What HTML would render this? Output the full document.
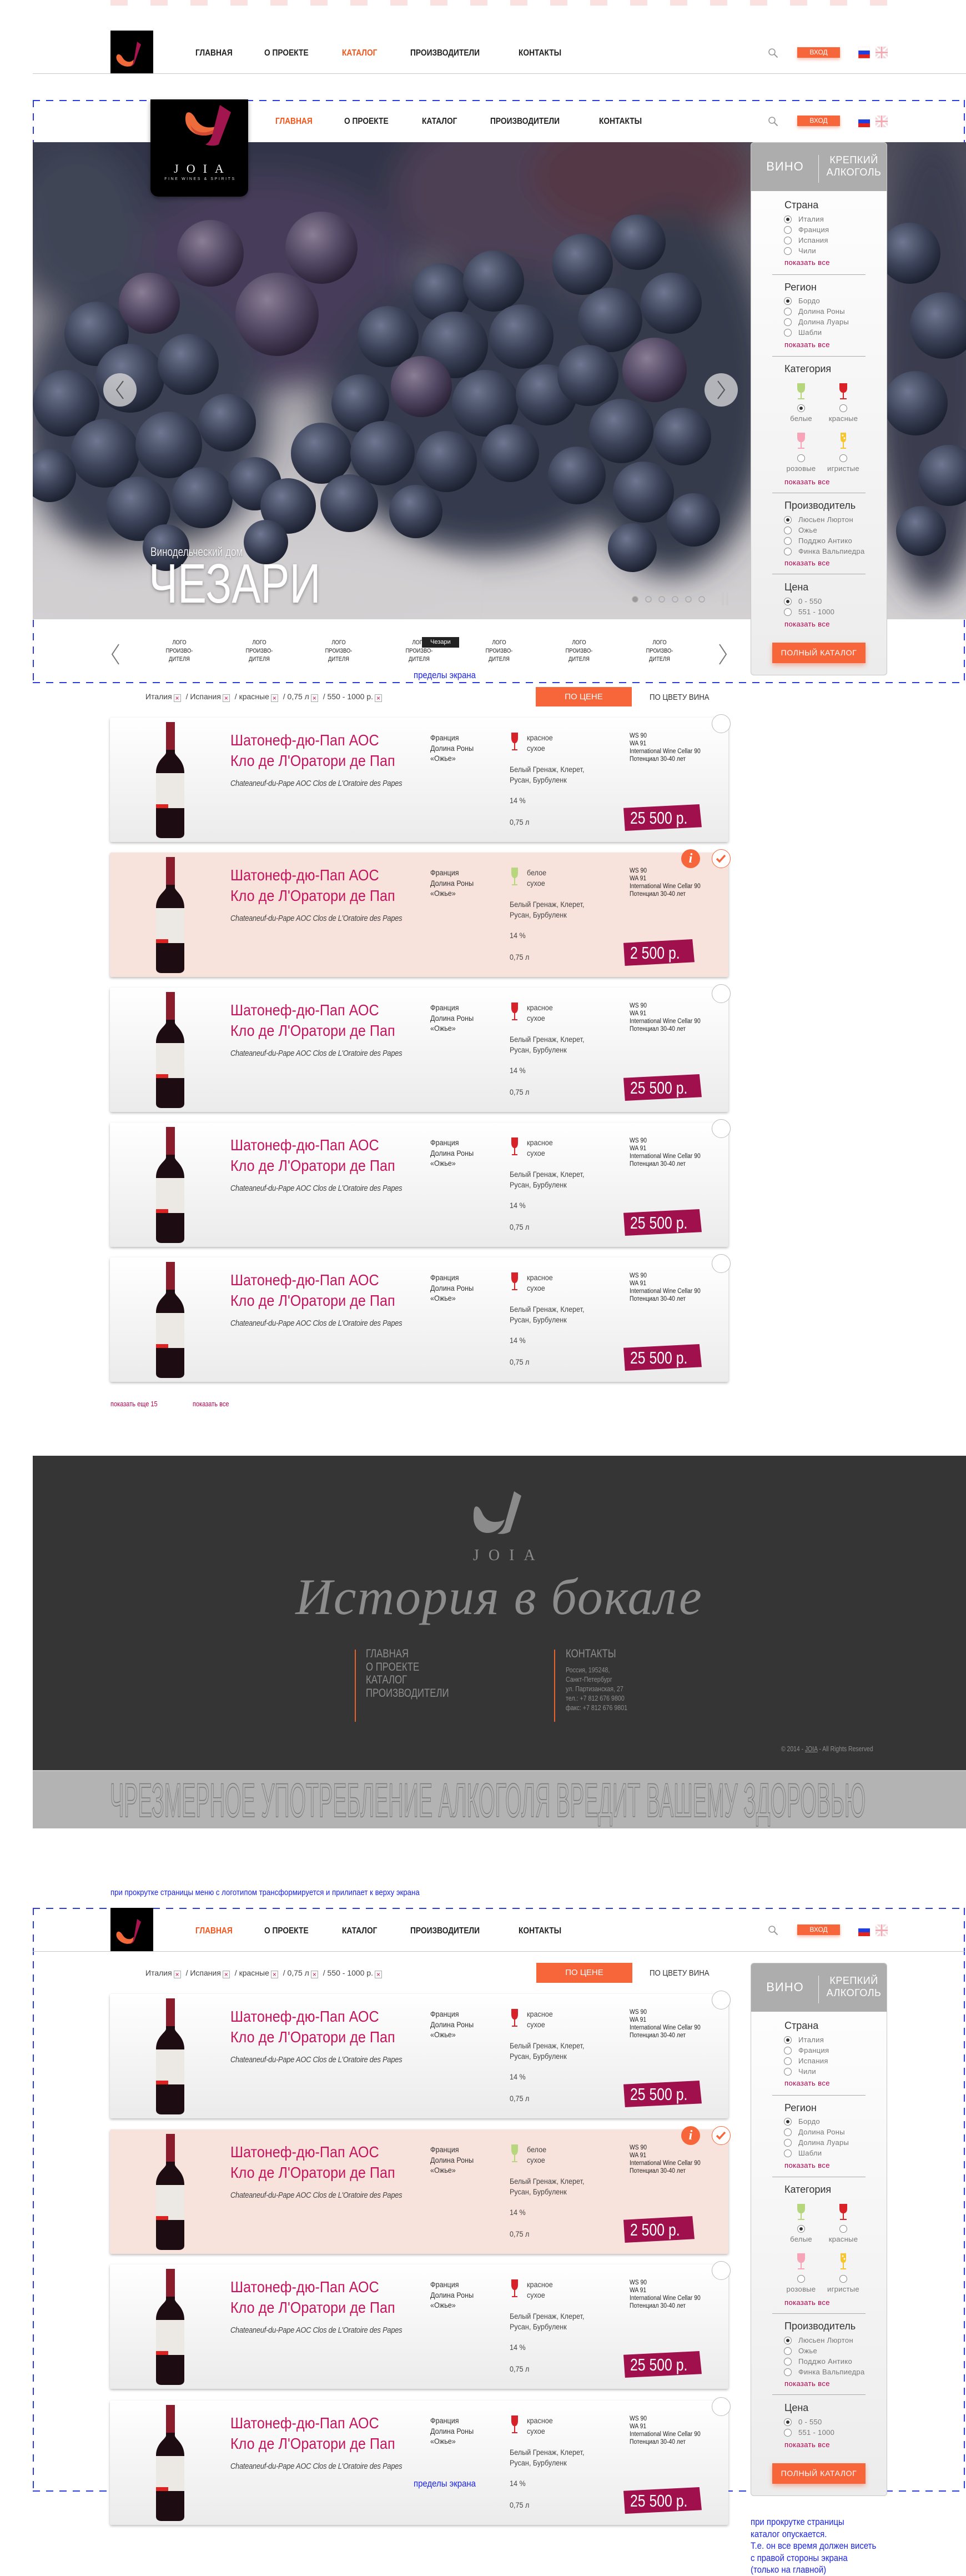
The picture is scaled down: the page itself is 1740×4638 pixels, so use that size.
<!DOCTYPE html>
<html><head><meta charset="utf-8">
<style>
*{margin:0;padding:0;box-sizing:border-box}
body{width:1740px;height:4637px;position:relative;background:#fff;font-family:"Liberation Sans","DejaVu Sans",sans-serif;overflow:hidden;color:#333}
.a{position:absolute}
.nav{position:absolute;font-size:16px;font-weight:bold;color:#222;transform:scaleX(.86);transform-origin:left center;white-space:nowrap;line-height:20px}
.nav.o{color:#f2561d}
.dh{position:absolute;height:2px;background:repeating-linear-gradient(90deg,#2a3be0 0 13px,transparent 13px 24px)}
.dv{position:absolute;width:2px;background:repeating-linear-gradient(180deg,#2a3be0 0 13px,transparent 13px 24px)}
.btn{position:absolute;background:#f7663b;color:#fff;font-size:12px;text-align:center;box-shadow:0 3px 6px rgba(247,102,59,.45)}
.card{position:absolute;left:198px;width:1114px;height:224px;background:linear-gradient(#fff,#ebebeb);box-shadow:0 2px 5px rgba(0,0,0,.28);border-radius:3px}
.card.p{background:#f8e3dc}
.card .t{position:absolute;left:217px;top:22px;font-size:28px;line-height:37px;color:#c4145e;white-space:nowrap;transform:scaleX(.9);transform-origin:left}
.card .s{position:absolute;left:217px;top:110px;font-size:15px;font-style:italic;color:#444;white-space:nowrap;transform:scaleX(.86);transform-origin:left;letter-spacing:-.3px}
.card .c2{position:absolute;left:577px;top:27px;font-size:14px;line-height:18.5px;color:#333;white-space:nowrap;transform:scaleX(.9);transform-origin:left}
.card .c3{position:absolute;left:751px;top:27px;font-size:14px;line-height:19px;color:#444;transform:scaleX(.9);transform-origin:left}
.card .c3b{position:absolute;left:720px;top:84px;font-size:14px;line-height:19px;color:#444;white-space:nowrap;transform:scaleX(.9);transform-origin:left}
.card .pc{position:absolute;left:720px;font-size:14px;color:#444;transform:scaleX(.9);transform-origin:left;line-height:18px}
.card .ws{position:absolute;left:936px;top:26px;font-size:11.5px;line-height:14px;color:#222;white-space:nowrap;transform:scaleX(.9);transform-origin:left}
.card .gl{position:absolute;left:722px;top:26px}
.card .bt{position:absolute;left:83px;top:8px}
.card .pr{position:absolute;left:925px;top:156px;height:48px;background:#a0104c;clip-path:polygon(0 14%,97% 0,100% 86%,2% 100%);color:#fff;font-size:31px;line-height:50px;padding-left:12px;white-space:nowrap;filter:drop-shadow(0 3px 2px rgba(0,0,0,.3))}
.card .pr span{display:inline-block;transform:scaleX(.8);transform-origin:left}
.card .ck{position:absolute;left:1084px;top:-6px;width:34px;height:34px;border-radius:50%;border:1.5px solid #bbb;background:#fff}
.card .ck.on{border-color:#f7663b}
.card .inf{position:absolute;left:1029px;top:-6px;width:34px;height:34px;border-radius:50%;background:#f7663b;color:#fff;font:italic bold 24px "Liberation Serif",serif;text-align:center;line-height:34px}
.flt{position:absolute;left:262px;font-size:14px;color:#444;white-space:nowrap;line-height:18px}
.x{display:inline-block;width:13px;height:14px;border:1px solid #aaa;color:#d0104c;font-size:12px;line-height:12px;text-align:center;vertical-align:-2px;margin:0 5px 0 3px;background:#fafafa}
.sb{position:absolute;left:1352px;width:246px;height:960px;border:1px solid #c8c8c8;border-radius:6px;background:linear-gradient(#fff,#ececec);overflow:hidden}
.sb .hd{position:absolute;left:0;top:0;width:246px;height:87px;background:#adadad}
.sb .h{position:absolute;left:60px;font-size:18px;color:#333;line-height:22px;white-space:nowrap}
.sb .i{position:absolute;left:85px;font-size:13px;color:#777;line-height:18px;white-space:nowrap;letter-spacing:.3px}
.sb .r{position:absolute;left:59px;width:14px;height:14px;border:1px solid #888;border-radius:50%;background:#fff}
.sb .r.on::after{content:"";position:absolute;left:3px;top:3px;width:6px;height:6px;border-radius:50%;background:#333}
.sb .m{position:absolute;left:60px;font-size:13px;color:#b5004d;line-height:18px;letter-spacing:.4px}
.sb .dl{position:absolute;left:38px;width:168px;height:1px;background:#aaa}
.sb .lb{position:absolute;font-size:13px;color:#777;width:80px;text-align:center;line-height:18px;letter-spacing:.3px}
.sb .b{position:absolute;left:38px;top:900px;width:168px;height:37px;background:#f7663b;color:#fff;font-size:14px;text-align:center;line-height:37px;letter-spacing:.6px;box-shadow:0 4px 8px rgba(247,102,59,.45)}
.blue{position:absolute;color:#1b25e6;font-size:15px;white-space:nowrap;transform:scaleX(.88);transform-origin:left}
.lg{position:absolute;width:80px;text-align:center;font-size:11px;line-height:15px;color:#222;transform:scaleX(.85)}
.ft{position:absolute;color:#8d8d8d;font-size:21px;line-height:23.5px;transform:scaleX(.8);transform-origin:left;white-space:nowrap}
</style></head><body>

<div class="a" style="left:199px;top:0;width:1400px;height:10px;background:repeating-linear-gradient(90deg,#fbe0e0 0 31px,transparent 31px 72px)"></div>

<div class="a" style="left:199px;top:55px;width:77px;height:78px;background:#000">
<svg width="77" height="78" viewBox="0 0 77 78"><path d="M12 44c3-3 7 0 10 5 5 8 14 10 20 3l-2 10c-8 6-22 2-28-8-2-4-2-8 0-10z" fill="#f26a3a"/><path d="M48 20l7 5-12 34c-3 6-9 6-9 6 5-2 7-6 8-10z" fill="#a6154f"/></svg></div>
<div class="nav" style="left:352px;top:86px">ГЛАВНАЯ</div>
<div class="nav" style="left:476px;top:86px">О ПРОЕКТЕ</div>
<div class="nav o" style="left:616px;top:86px">КАТАЛОГ</div>
<div class="nav" style="left:739px;top:86px">ПРОИЗВОДИТЕЛИ</div>
<div class="nav" style="left:934px;top:86px">КОНТАКТЫ</div>
<div class="a" style="left:59px;top:132px;width:1681px;height:1px;background:#c8c8c8"></div>

<svg class="a" style="left:1383px;top:86px" width="20" height="20" viewBox="0 0 20 20"><circle cx="7.5" cy="7.5" r="5.5" fill="none" stroke="#999" stroke-width="1.6"/><path d="M11.5 11.5l6 6" stroke="#999" stroke-width="2"/></svg>
<div class="btn" style="left:1436px;top:85px;width:77px;height:19px;line-height:19px">ВХОД</div>
<svg class="a" style="left:1546px;top:84px" width="21" height="21"><rect width="21" height="7" fill="#fff"/><rect y="7" width="21" height="7" fill="#1f3fe0"/><rect y="14" width="21" height="7" fill="#e2261f"/><rect width="21" height="21" fill="none" stroke="#ddd" stroke-width=".5"/></svg>
<svg class="a" style="left:1577px;top:84px" width="22" height="21"><rect width="22" height="21" fill="#f6d1d6"/><path d="M0 0L22 21M22 0L0 21" stroke="#fff" stroke-width="3"/><path d="M11 0v21M0 10.5h22" stroke="#fff" stroke-width="6"/><path d="M11 0v21M0 10.5h22" stroke="#f2a9b2" stroke-width="3"/></svg>

<div class="dh" style="left:59px;top:180px;width:1680px"></div>
<div class="dv" style="left:59px;top:180px;height:1050px"></div>
<div class="dv" style="left:1736px;top:180px;height:1050px"></div>
<div class="dh" style="left:59px;top:1228px;width:1680px"></div>

<div class="nav o" style="left:496px;top:209px">ГЛАВНАЯ</div>
<div class="nav" style="left:620px;top:209px">О ПРОЕКТЕ</div>
<div class="nav" style="left:760px;top:209px">КАТАЛОГ</div>
<div class="nav" style="left:883px;top:209px">ПРОИЗВОДИТЕЛИ</div>
<div class="nav" style="left:1079px;top:209px">КОНТАКТЫ</div>
<svg class="a" style="left:1383px;top:209px" width="20" height="20" viewBox="0 0 20 20"><circle cx="7.5" cy="7.5" r="5.5" fill="none" stroke="#999" stroke-width="1.6"/><path d="M11.5 11.5l6 6" stroke="#999" stroke-width="2"/></svg>
<div class="btn" style="left:1436px;top:208px;width:77px;height:19px;line-height:19px">ВХОД</div>
<svg class="a" style="left:1546px;top:208px" width="21" height="21"><rect width="21" height="7" fill="#fff"/><rect y="7" width="21" height="7" fill="#1f3fe0"/><rect y="14" width="21" height="7" fill="#e2261f"/></svg>
<svg class="a" style="left:1577px;top:208px" width="22" height="21"><rect width="22" height="21" fill="#f6d1d6"/><path d="M0 0L22 21M22 0L0 21" stroke="#fff" stroke-width="3"/><path d="M11 0v21M0 10.5h22" stroke="#fff" stroke-width="6"/><path d="M11 0v21M0 10.5h22" stroke="#f2a9b2" stroke-width="3"/></svg>

<svg class="a" style="left:59px;top:256px" width="1681" height="859" viewBox="0 0 1681 859">
<defs>
<filter id="bl" x="-30%" y="-30%" width="160%" height="160%"><feGaussianBlur stdDeviation="28"/></filter>
<radialGradient id="g" cx="38%" cy="32%" r="70%"><stop offset="0" stop-color="#6f7891"/><stop offset=".55" stop-color="#3d445a"/><stop offset="1" stop-color="#1c2130"/></radialGradient>
<radialGradient id="gp" cx="38%" cy="32%" r="70%"><stop offset="0" stop-color="#8a7d95"/><stop offset=".6" stop-color="#4e4460"/><stop offset="1" stop-color="#2a2236"/></radialGradient>
<linearGradient id="bg" x1="0" y1="0" x2="0" y2="1"><stop offset="0" stop-color="#4e4d5a"/><stop offset=".45" stop-color="#99969e"/><stop offset=".75" stop-color="#c9c6c9"/><stop offset="1" stop-color="#d4d1d3"/></linearGradient>
</defs>
<rect width="1681" height="859" fill="url(#bg)"/>
<g filter="url(#bl)">
<ellipse cx="600" cy="60" rx="700" ry="150" fill="#33364a"/>
<ellipse cx="420" cy="250" rx="260" ry="190" fill="#463d5a"/>
<ellipse cx="900" cy="90" rx="250" ry="160" fill="#4d3f54"/>
<ellipse cx="1100" cy="60" rx="200" ry="110" fill="#553845"/>
<ellipse cx="80" cy="150" rx="120" ry="150" fill="#3f4456"/>
<ellipse cx="1620" cy="400" rx="110" ry="420" fill="#3a3d50"/>
<ellipse cx="200" cy="500" rx="220" ry="260" fill="#3a3f52"/>
<ellipse cx="820" cy="480" rx="300" ry="260" fill="#353a4e"/>
<ellipse cx="1150" cy="450" rx="180" ry="330" fill="#343a4c"/>
<ellipse cx="350" cy="820" rx="400" ry="90" fill="#d2cfd1"/>
</g>
<g>
<circle cx="115" cy="345" r="58" fill="url(#g)"/><circle cx="210" cy="290" r="55" fill="url(#gp)"/>
<circle cx="60" cy="470" r="60" fill="url(#g)"/><circle cx="175" cy="425" r="62" fill="url(#g)"/>
<circle cx="280" cy="400" r="55" fill="url(#g)"/><circle cx="130" cy="560" r="62" fill="url(#g)"/>
<circle cx="245" cy="545" r="60" fill="url(#g)"/><circle cx="350" cy="505" r="52" fill="url(#g)"/>
<circle cx="190" cy="660" r="58" fill="url(#g)"/><circle cx="305" cy="640" r="55" fill="url(#g)"/>
<circle cx="400" cy="615" r="48" fill="url(#g)"/><circle cx="240" cy="730" r="42" fill="url(#g)"/>
<circle cx="30" cy="600" r="48" fill="url(#g)"/>
<circle cx="320" cy="200" r="60" fill="url(#gp)"/><circle cx="440" cy="310" r="75" fill="url(#gp)"/>
<circle cx="520" cy="190" r="65" fill="url(#gp)"/>
<circle cx="735" cy="270" r="52" fill="url(#g)"/><circle cx="830" cy="250" r="55" fill="url(#g)"/>
<circle cx="640" cy="350" r="55" fill="url(#g)"/><circle cx="760" cy="365" r="60" fill="url(#g)"/>
<circle cx="880" cy="350" r="58" fill="url(#g)"/><circle cx="700" cy="440" r="55" fill="url(#gp)"/>
<circle cx="815" cy="470" r="60" fill="url(#g)"/><circle cx="925" cy="455" r="55" fill="url(#g)"/>
<circle cx="590" cy="470" r="52" fill="url(#g)"/><circle cx="520" cy="560" r="55" fill="url(#g)"/>
<circle cx="630" cy="560" r="58" fill="url(#g)"/><circle cx="745" cy="575" r="55" fill="url(#g)"/>
<circle cx="860" cy="560" r="52" fill="url(#g)"/><circle cx="460" cy="655" r="50" fill="url(#g)"/>
<circle cx="570" cy="650" r="52" fill="url(#g)"/><circle cx="690" cy="665" r="48" fill="url(#g)"/>
<circle cx="420" cy="720" r="40" fill="url(#g)"/>
<circle cx="990" cy="220" r="55" fill="url(#g)"/><circle cx="1090" cy="180" r="50" fill="url(#g)"/>
<circle cx="1040" cy="320" r="58" fill="url(#g)"/><circle cx="1150" cy="290" r="55" fill="url(#g)"/>
<circle cx="1000" cy="420" r="55" fill="url(#g)"/><circle cx="1120" cy="410" r="58" fill="url(#gp)"/>
<circle cx="1060" cy="520" r="58" fill="url(#g)"/><circle cx="1170" cy="530" r="52" fill="url(#g)"/>
<circle cx="980" cy="600" r="52" fill="url(#g)"/><circle cx="1100" cy="630" r="55" fill="url(#g)"/>
<circle cx="1190" cy="680" r="48" fill="url(#g)"/><circle cx="1080" cy="730" r="44" fill="url(#g)"/>
<circle cx="1580" cy="200" r="55" fill="url(#g)"/><circle cx="1640" cy="330" r="60" fill="url(#g)"/>
<circle cx="1590" cy="470" r="58" fill="url(#g)"/><circle cx="1650" cy="600" r="55" fill="url(#g)"/>
<circle cx="1600" cy="700" r="45" fill="url(#g)"/>
</g>
<circle cx="157" cy="446" r="30" fill="#ddd" fill-opacity=".75"/>
<path d="M163 430l-12 16 12 16" fill="none" stroke="#555" stroke-width="2"/>
<circle cx="1240" cy="446" r="30" fill="#ddd" fill-opacity=".75"/>
<path d="M1234 430l12 16-12 16" fill="none" stroke="#555" stroke-width="2"/>
<g fill="none" stroke="#aaa" stroke-width="1.5">
<circle cx="1085" cy="823" r="5" fill="#999"/><circle cx="1109" cy="823" r="5"/><circle cx="1133" cy="823" r="5"/><circle cx="1157" cy="823" r="5"/><circle cx="1181" cy="823" r="5"/><circle cx="1205" cy="823" r="5"/></g>
<rect x="1241" y="810" width="4" height="24" fill="#ccc"/><rect x="1249" y="810" width="4" height="24" fill="#ccc"/>
</svg>
<div class="a" style="left:271px;top:981px;color:#f2f2f2;font-size:22px;white-space:nowrap;transform:scaleX(.78);transform-origin:left;text-shadow:0 1px 3px rgba(0,0,0,.4)">Винодельческий дом</div>
<div class="a" style="left:268px;top:996px;color:#fff;font-size:100px;line-height:110px;white-space:nowrap;transform:scaleX(.78);transform-origin:left;text-shadow:0 2px 6px rgba(0,0,0,.35)">ЧЕЗАРИ</div>

<div class="a" style="left:271px;top:179px;width:176px;height:175px;background:#000;border-radius:0 0 14px 14px;box-shadow:0 3px 8px rgba(0,0,0,.4)">
<svg width="176" height="90" viewBox="0 0 176 90"><path d="M66 24c6-3 12 4 16 12 6 11 17 16 30 14 8-1 14-4 19-6-6 12-18 21-35 21-17 0-28-10-32-22-2-8-1-17 2-19z" fill="#ee6b3b"/><path d="M72 46c8 14 28 22 59-2-6 12-18 21-35 21-13 0-21-7-24-19z" fill="#d14a33"/><path d="M125 10l20 13-22 58c-5 3-18 3-24 0 8-4 11-12 13-20z" fill="#a1164e"/></svg>
<div class="a" style="left:0;top:112px;width:176px;text-align:center;color:#eee;font:22px 'Liberation Serif',serif;letter-spacing:14px;padding-left:12px">JOIA</div>
<div class="a" style="left:0;top:140px;width:176px;text-align:center;color:#ddd;font-size:7px;letter-spacing:2.6px;padding-left:3px">FINE WINES &amp; SPIRITS</div>
</div>

<svg class="a" style="left:198px;top:1158px" width="20" height="40"><path d="M16 2L4 20l12 18" fill="none" stroke="#777" stroke-width="2"/></svg>
<svg class="a" style="left:1292px;top:1158px" width="20" height="40"><path d="M4 2l12 18L4 38" fill="none" stroke="#777" stroke-width="2"/></svg>
<div class="lg" style="left:283px;top:1150px">ЛОГО<br>ПРОИЗВО-<br>ДИТЕЛЯ</div>
<div class="lg" style="left:427px;top:1150px">ЛОГО<br>ПРОИЗВО-<br>ДИТЕЛЯ</div>
<div class="lg" style="left:570px;top:1150px">ЛОГО<br>ПРОИЗВО-<br>ДИТЕЛЯ</div>
<div class="lg" style="left:715px;top:1150px">ЛОГО<br>ПРОИЗВО-<br>ДИТЕЛЯ</div>
<div class="lg" style="left:859px;top:1150px">ЛОГО<br>ПРОИЗВО-<br>ДИТЕЛЯ</div>
<div class="lg" style="left:1003px;top:1150px">ЛОГО<br>ПРОИЗВО-<br>ДИТЕЛЯ</div>
<div class="lg" style="left:1148px;top:1150px">ЛОГО<br>ПРОИЗВО-<br>ДИТЕЛЯ</div>
<div class="a" style="left:760px;top:1147px;width:67px;height:19px;background:#222;color:#fff;font-size:11px;line-height:19px;text-align:center">Чезари</div>
<div class="blue" style="left:745px;top:1206px;font-size:17px">пределы экрана</div>

<div class="sb" style="top:256px">
 <div class="hd"></div>
 <div class="a" style="left:0;top:30px;width:122px;text-align:center;color:#fff;font-size:22px;letter-spacing:1px">ВИНО</div>
 <div class="a" style="left:121px;top:22px;width:1px;height:50px;background:#eee"></div>
 <div class="a" style="left:124px;top:20px;width:122px;text-align:center;color:#fff;font-size:18px;line-height:22px;letter-spacing:.5px">КРЕПКИЙ<br>АЛКОГОЛЬ</div>
 <div class="h" style="top:101px">Страна</div>
 <div class="r on" style="top:131px"></div><div class="i" style="top:129px">Италия</div>
 <div class="r" style="top:150px"></div><div class="i" style="top:148px">Франция</div>
 <div class="r" style="top:169px"></div><div class="i" style="top:167px">Испания</div>
 <div class="r" style="top:188px"></div><div class="i" style="top:186px">Чили</div>
 <div class="m" style="top:207px">показать все</div>
 <div class="dl" style="top:237px"></div>
 <div class="h" style="top:249px">Регион</div>
 <div class="r on" style="top:278px"></div><div class="i" style="top:276px">Бордо</div>
 <div class="r" style="top:297px"></div><div class="i" style="top:295px">Долина Роны</div>
 <div class="r" style="top:316px"></div><div class="i" style="top:314px">Долина Луары</div>
 <div class="r" style="top:335px"></div><div class="i" style="top:333px">Шабли</div>
 <div class="m" style="top:355px">показать все</div>
 <div class="dl" style="top:384px"></div>
 <div class="h" style="top:396px">Категория</div>
 <svg class="a" style="left:80px;top:432px" width="20" height="32"><path d="M3 1h14v9c0 5-3 8-6 8v10h5v2H4v-2h5V18c-3 0-6-3-6-8z" fill="#b5d67c"/></svg>
 <svg class="a" style="left:156px;top:432px" width="20" height="32"><path d="M3 1h14v9c0 5-3 8-6 8v10h5v2H4v-2h5V18c-3 0-6-3-6-8z" fill="#da2128"/></svg>
 <div class="r on" style="left:83px;top:471px"></div><div class="r" style="left:159px;top:471px"></div>
 <div class="lb" style="left:50px;top:488px">белые</div><div class="lb" style="left:126px;top:488px">красные</div>
 <svg class="a" style="left:80px;top:521px" width="20" height="32"><path d="M3 1h14v9c0 5-3 8-6 8v10h5v2H4v-2h5V18c-3 0-6-3-6-8z" fill="#f7a3b8"/></svg>
 <svg class="a" style="left:156px;top:521px" width="20" height="32"><path d="M5 1h10v11c0 4-2 6-4 6v10h4v2H5v-2h4V18c-2 0-4-2-4-6z" fill="#f7c530"/><circle cx="9" cy="6" r="1.5" fill="#fff"/><circle cx="12" cy="11" r="1.5" fill="#fff"/></svg>
 <div class="r" style="left:83px;top:561px"></div><div class="r" style="left:159px;top:561px"></div>
 <div class="lb" style="left:50px;top:578px">розовые</div><div class="lb" style="left:126px;top:578px">игристые</div>
 <div class="m" style="top:602px">показать все</div>
 <div class="dl" style="top:630px"></div>
 <div class="h" style="top:642px">Производитель</div>
 <div class="r on" style="top:672px"></div><div class="i" style="top:670px">Люсьен Люртон</div>
 <div class="r" style="top:691px"></div><div class="i" style="top:689px">Ожье</div>
 <div class="r" style="top:710px"></div><div class="i" style="top:708px">Подджо Антико</div>
 <div class="r" style="top:729px"></div><div class="i" style="top:727px">Финка Вальпиедра</div>
 <div class="m" style="top:748px">показать все</div>
 <div class="dl" style="top:776px"></div>
 <div class="h" style="top:789px">Цена</div>
 <div class="r on" style="top:819px"></div><div class="i" style="top:817px">0 - 550</div>
 <div class="r" style="top:838px"></div><div class="i" style="top:836px">551 - 1000</div>
 <div class="m" style="top:858px">показать все</div>
 <div class="b">ПОЛНЫЙ КАТАЛОГ</div>
</div>

<div class="flt" style="top:1245px">Италия<span class="x">×</span> / Испания<span class="x">×</span> / красные<span class="x">×</span> / 0,75 л<span class="x">×</span> / 550 - 1000 р.<span class="x">×</span></div>
<div class="a" style="left:965px;top:1237px;width:173px;height:35px;background:#f7663b;color:#fff;font-size:15px;line-height:35px;text-align:center">ПО ЦЕНЕ</div>
<div class="a" style="left:1170px;top:1247px;font-size:15px;color:#333;white-space:nowrap;transform:scaleX(.88);transform-origin:left">ПО ЦВЕТУ ВИНА</div>

<div class="card" style="top:1292px">
 <svg class="bt" width="51" height="209" viewBox="0 0 51 209"><path d="M18 0h16v55c0 6 17 14 17 36v110c0 5-4 8-10 8H10c-6 0-10-3-10-8V91c0-22 18-30 18-36z" fill="#1d0d13"/><path d="M18 0h16v50H18z" fill="#8b1c2b"/><rect x="0" y="92" width="51" height="63" fill="#ece9e5"/><rect x="0" y="148" width="22" height="7" fill="#d22"/><rect x="0" y="155" width="51" height="46" fill="#1d0d13"/></svg>
 <div class="t">Шатонеф-дю-Пап АОС<br>Кло де Л'Оратори де Пап</div>
 <div class="s">Chateaneuf-du-Pape AOC Clos de L'Oratoire des Papes</div>
 <div class="c2">Франция<br>Долина Роны<br>«Ожье»</div>
 <svg class="gl" width="14" height="34" viewBox="0 0 14 34"><path d="M1 1h12v10c0 6-3 9-5 9v11h4v2H2v-2h4V20c-2 0-5-3-5-9z" fill="#d8222a"/></svg>
 <div class="c3">красное<br>сухое</div>
 <div class="c3b">Белый Гренаж, Клерет,<br>Русан, Бурбуленк</div>
 <div class="pc" style="top:140px">14 %</div><div class="pc" style="top:179px">0,75 л</div>
 <div class="ws">WS 90<br>WA 91<br>International Wine Cellar 90<br>Потенциал 30-40 лет</div>
 <div class="pr" style="width:141px"><span>25 500 р.</span></div>
 <div class="ck"></div>
</div>

<div class="card p" style="top:1535px">
 <svg class="bt" width="51" height="209" viewBox="0 0 51 209"><path d="M18 0h16v55c0 6 17 14 17 36v110c0 5-4 8-10 8H10c-6 0-10-3-10-8V91c0-22 18-30 18-36z" fill="#1d0d13"/><path d="M18 0h16v50H18z" fill="#8b1c2b"/><rect x="0" y="92" width="51" height="63" fill="#ece9e5"/><rect x="0" y="148" width="22" height="7" fill="#d22"/><rect x="0" y="155" width="51" height="46" fill="#1d0d13"/></svg>
 <div class="t">Шатонеф-дю-Пап АОС<br>Кло де Л'Оратори де Пап</div>
 <div class="s">Chateaneuf-du-Pape AOC Clos de L'Oratoire des Papes</div>
 <div class="c2">Франция<br>Долина Роны<br>«Ожье»</div>
 <svg class="gl" width="14" height="34" viewBox="0 0 14 34"><path d="M1 1h12v10c0 6-3 9-5 9v11h4v2H2v-2h4V20c-2 0-5-3-5-9z" fill="#b8d67e"/></svg>
 <div class="c3">белое<br>сухое</div>
 <div class="c3b">Белый Гренаж, Клерет,<br>Русан, Бурбуленк</div>
 <div class="pc" style="top:140px">14 %</div><div class="pc" style="top:179px">0,75 л</div>
 <div class="ws">WS 90<br>WA 91<br>International Wine Cellar 90<br>Потенциал 30-40 лет</div>
 <div class="pr" style="width:128px"><span>2 500 р.</span></div>
 <div class="inf">i</div>
 <div class="ck on"><svg width="31" height="31" viewBox="0 0 31 31"><path d="M8 16l5 5 10-11" fill="none" stroke="#f7663b" stroke-width="3.5"/></svg></div>
</div>

<div class="card" style="top:1778px">
 <svg class="bt" width="51" height="209" viewBox="0 0 51 209"><path d="M18 0h16v55c0 6 17 14 17 36v110c0 5-4 8-10 8H10c-6 0-10-3-10-8V91c0-22 18-30 18-36z" fill="#1d0d13"/><path d="M18 0h16v50H18z" fill="#8b1c2b"/><rect x="0" y="92" width="51" height="63" fill="#ece9e5"/><rect x="0" y="148" width="22" height="7" fill="#d22"/><rect x="0" y="155" width="51" height="46" fill="#1d0d13"/></svg>
 <div class="t">Шатонеф-дю-Пап АОС<br>Кло де Л'Оратори де Пап</div>
 <div class="s">Chateaneuf-du-Pape AOC Clos de L'Oratoire des Papes</div>
 <div class="c2">Франция<br>Долина Роны<br>«Ожье»</div>
 <svg class="gl" width="14" height="34" viewBox="0 0 14 34"><path d="M1 1h12v10c0 6-3 9-5 9v11h4v2H2v-2h4V20c-2 0-5-3-5-9z" fill="#d8222a"/></svg>
 <div class="c3">красное<br>сухое</div>
 <div class="c3b">Белый Гренаж, Клерет,<br>Русан, Бурбуленк</div>
 <div class="pc" style="top:140px">14 %</div><div class="pc" style="top:179px">0,75 л</div>
 <div class="ws">WS 90<br>WA 91<br>International Wine Cellar 90<br>Потенциал 30-40 лет</div>
 <div class="pr" style="width:141px"><span>25 500 р.</span></div>
 <div class="ck"></div>
</div>

<div class="card" style="top:2021px">
 <svg class="bt" width="51" height="209" viewBox="0 0 51 209"><path d="M18 0h16v55c0 6 17 14 17 36v110c0 5-4 8-10 8H10c-6 0-10-3-10-8V91c0-22 18-30 18-36z" fill="#1d0d13"/><path d="M18 0h16v50H18z" fill="#8b1c2b"/><rect x="0" y="92" width="51" height="63" fill="#ece9e5"/><rect x="0" y="148" width="22" height="7" fill="#d22"/><rect x="0" y="155" width="51" height="46" fill="#1d0d13"/></svg>
 <div class="t">Шатонеф-дю-Пап АОС<br>Кло де Л'Оратори де Пап</div>
 <div class="s">Chateaneuf-du-Pape AOC Clos de L'Oratoire des Papes</div>
 <div class="c2">Франция<br>Долина Роны<br>«Ожье»</div>
 <svg class="gl" width="14" height="34" viewBox="0 0 14 34"><path d="M1 1h12v10c0 6-3 9-5 9v11h4v2H2v-2h4V20c-2 0-5-3-5-9z" fill="#d8222a"/></svg>
 <div class="c3">красное<br>сухое</div>
 <div class="c3b">Белый Гренаж, Клерет,<br>Русан, Бурбуленк</div>
 <div class="pc" style="top:140px">14 %</div><div class="pc" style="top:179px">0,75 л</div>
 <div class="ws">WS 90<br>WA 91<br>International Wine Cellar 90<br>Потенциал 30-40 лет</div>
 <div class="pr" style="width:141px"><span>25 500 р.</span></div>
 <div class="ck"></div>
</div>

<div class="card" style="top:2264px">
 <svg class="bt" width="51" height="209" viewBox="0 0 51 209"><path d="M18 0h16v55c0 6 17 14 17 36v110c0 5-4 8-10 8H10c-6 0-10-3-10-8V91c0-22 18-30 18-36z" fill="#1d0d13"/><path d="M18 0h16v50H18z" fill="#8b1c2b"/><rect x="0" y="92" width="51" height="63" fill="#ece9e5"/><rect x="0" y="148" width="22" height="7" fill="#d22"/><rect x="0" y="155" width="51" height="46" fill="#1d0d13"/></svg>
 <div class="t">Шатонеф-дю-Пап АОС<br>Кло де Л'Оратори де Пап</div>
 <div class="s">Chateaneuf-du-Pape AOC Clos de L'Oratoire des Papes</div>
 <div class="c2">Франция<br>Долина Роны<br>«Ожье»</div>
 <svg class="gl" width="14" height="34" viewBox="0 0 14 34"><path d="M1 1h12v10c0 6-3 9-5 9v11h4v2H2v-2h4V20c-2 0-5-3-5-9z" fill="#d8222a"/></svg>
 <div class="c3">красное<br>сухое</div>
 <div class="c3b">Белый Гренаж, Клерет,<br>Русан, Бурбуленк</div>
 <div class="pc" style="top:140px">14 %</div><div class="pc" style="top:179px">0,75 л</div>
 <div class="ws">WS 90<br>WA 91<br>International Wine Cellar 90<br>Потенциал 30-40 лет</div>
 <div class="pr" style="width:141px"><span>25 500 р.</span></div>
 <div class="ck"></div>
</div>

<div class="a" style="left:199px;top:2520px;font-size:13px;color:#b5004d;transform:scaleX(.85);transform-origin:left;white-space:nowrap">показать еще 15</div>
<div class="a" style="left:347px;top:2520px;font-size:13px;color:#b5004d;transform:scaleX(.85);transform-origin:left;white-space:nowrap">показать все</div>

<div class="a" style="left:59px;top:2621px;width:1681px;height:566px;background:#353535"></div>
<svg class="a" style="left:850px;top:2685px" width="110" height="90" viewBox="0 0 110 90"><path d="M6 28c4-3 9 3 12 10 5 12 14 18 26 17 6 0 11-2 15-4-5 14-16 24-31 24C12 75 3 62 3 48c0-8 0-17 3-20z" fill="#8a8a8a"/><path d="M76 0l13 8-20 64c-4 4-16 6-23 4 9-4 13-12 15-22z" fill="#8a8a8a"/></svg>
<div class="a" style="left:835px;top:2785px;width:135px;text-align:center;color:#8a8a8a;font:28px 'Liberation Serif',serif;letter-spacing:17px;padding-left:17px">JOIA</div>
<div class="a" style="left:466px;top:2815px;width:866px;text-align:center;color:#8c8c8c;font:italic 92px/120px 'Liberation Serif',serif;white-space:nowrap;letter-spacing:2px">История в бокале</div>
<div class="a" style="left:639px;top:2970px;width:2px;height:130px;background:#e8622f"></div>
<div class="ft" style="left:659px;top:2966px">ГЛАВНАЯ<br>О ПРОЕКТЕ<br>КАТАЛОГ<br>ПРОИЗВОДИТЕЛИ</div>
<div class="a" style="left:998px;top:2970px;width:2px;height:130px;background:#e8622f"></div>
<div class="ft" style="left:1019px;top:2966px">КОНТАКТЫ</div>
<div class="a" style="left:1019px;top:2998px;color:#8d8d8d;font-size:13px;line-height:17px;transform:scaleX(.82);transform-origin:left;white-space:nowrap">Россия, 195248,<br>Санкт-Петербург<br>ул. Партизанская, 27<br>тел.: +7 812 676 9800<br>факс: +7 812 676 9801</div>
<div class="a" style="left:1407px;top:3141px;color:#8d8d8d;font-size:13px;transform:scaleX(.8);transform-origin:left;white-space:nowrap">© 2014 - <u>JOIA</u> - All Rights Reserved</div>
<div class="a" style="left:59px;top:3187px;width:1681px;height:105px;background:#b3b3b3;border-top:2px solid #c4c4c4"></div>
<div class="a" style="left:198px;top:3192px;font-size:86px;line-height:100px;white-space:nowrap;color:transparent;-webkit-text-stroke:1.6px #7a7a7a;transform:scaleX(.44);transform-origin:left">ЧРЕЗМЕРНОЕ УПОТРЕБЛЕНИЕ АЛКОГОЛЯ ВРЕДИТ ВАШЕМУ ЗДОРОВЬЮ</div>

<div class="blue" style="left:199px;top:3399px">при прокрутке страницы меню с логотипом трансформируется и прилипает к верху экрана</div>
<div class="dh" style="left:59px;top:3435px;width:1680px"></div>
<div class="dv" style="left:59px;top:3435px;height:1050px"></div>
<div class="dv" style="left:1736px;top:3435px;height:1050px"></div>
<div class="dh" style="left:59px;top:4484px;width:1680px"></div>

<div class="a" style="left:199px;top:3435px;width:77px;height:78px;background:#000">
<svg width="77" height="78" viewBox="0 0 77 78"><path d="M12 44c3-3 7 0 10 5 5 8 14 10 20 3l-2 10c-8 6-22 2-28-8-2-4-2-8 0-10z" fill="#f26a3a"/><path d="M48 20l7 5-12 34c-3 6-9 6-9 6 5-2 7-6 8-10z" fill="#a6154f"/></svg></div>
<div class="nav o" style="left:352px;top:3467px">ГЛАВНАЯ</div>
<div class="nav" style="left:476px;top:3467px">О ПРОЕКТЕ</div>
<div class="nav" style="left:616px;top:3467px">КАТАЛОГ</div>
<div class="nav" style="left:739px;top:3467px">ПРОИЗВОДИТЕЛИ</div>
<div class="nav" style="left:934px;top:3467px">КОНТАКТЫ</div>
<div class="a" style="left:59px;top:3513px;width:1679px;height:1px;background:#c8c8c8"></div>
<svg class="a" style="left:1383px;top:3466px" width="20" height="20" viewBox="0 0 20 20"><circle cx="7.5" cy="7.5" r="5.5" fill="none" stroke="#999" stroke-width="1.6"/><path d="M11.5 11.5l6 6" stroke="#999" stroke-width="2"/></svg>
<div class="btn" style="left:1436px;top:3465px;width:77px;height:19px;line-height:19px">ВХОД</div>
<svg class="a" style="left:1546px;top:3465px" width="21" height="21"><rect width="21" height="7" fill="#fff"/><rect y="7" width="21" height="7" fill="#1f3fe0"/><rect y="14" width="21" height="7" fill="#e2261f"/></svg>
<svg class="a" style="left:1577px;top:3465px" width="22" height="21"><rect width="22" height="21" fill="#f6d1d6"/><path d="M0 0L22 21M22 0L0 21" stroke="#fff" stroke-width="3"/><path d="M11 0v21M0 10.5h22" stroke="#fff" stroke-width="6"/><path d="M11 0v21M0 10.5h22" stroke="#f2a9b2" stroke-width="3"/></svg>

<div class="flt" style="top:3543px">Италия<span class="x">×</span> / Испания<span class="x">×</span> / красные<span class="x">×</span> / 0,75 л<span class="x">×</span> / 550 - 1000 р.<span class="x">×</span></div>
<div class="a" style="left:966px;top:3534px;width:173px;height:36px;background:#f7663b;color:#fff;font-size:15px;line-height:36px;text-align:center">ПО ЦЕНЕ</div>
<div class="a" style="left:1170px;top:3544px;font-size:15px;color:#333;white-space:nowrap;transform:scaleX(.88);transform-origin:left">ПО ЦВЕТУ ВИНА</div>

<div class="card" style="top:3590px">
 <svg class="bt" width="51" height="209" viewBox="0 0 51 209"><path d="M18 0h16v55c0 6 17 14 17 36v110c0 5-4 8-10 8H10c-6 0-10-3-10-8V91c0-22 18-30 18-36z" fill="#1d0d13"/><path d="M18 0h16v50H18z" fill="#8b1c2b"/><rect x="0" y="92" width="51" height="63" fill="#ece9e5"/><rect x="0" y="148" width="22" height="7" fill="#d22"/><rect x="0" y="155" width="51" height="46" fill="#1d0d13"/></svg>
 <div class="t">Шатонеф-дю-Пап АОС<br>Кло де Л'Оратори де Пап</div>
 <div class="s">Chateaneuf-du-Pape AOC Clos de L'Oratoire des Papes</div>
 <div class="c2">Франция<br>Долина Роны<br>«Ожье»</div>
 <svg class="gl" width="14" height="34" viewBox="0 0 14 34"><path d="M1 1h12v10c0 6-3 9-5 9v11h4v2H2v-2h4V20c-2 0-5-3-5-9z" fill="#d8222a"/></svg>
 <div class="c3">красное<br>сухое</div>
 <div class="c3b">Белый Гренаж, Клерет,<br>Русан, Бурбуленк</div>
 <div class="pc" style="top:140px">14 %</div><div class="pc" style="top:179px">0,75 л</div>
 <div class="ws">WS 90<br>WA 91<br>International Wine Cellar 90<br>Потенциал 30-40 лет</div>
 <div class="pr" style="width:141px"><span>25 500 р.</span></div>
 <div class="ck"></div>
</div>

<div class="card p" style="top:3834px">
 <svg class="bt" width="51" height="209" viewBox="0 0 51 209"><path d="M18 0h16v55c0 6 17 14 17 36v110c0 5-4 8-10 8H10c-6 0-10-3-10-8V91c0-22 18-30 18-36z" fill="#1d0d13"/><path d="M18 0h16v50H18z" fill="#8b1c2b"/><rect x="0" y="92" width="51" height="63" fill="#ece9e5"/><rect x="0" y="148" width="22" height="7" fill="#d22"/><rect x="0" y="155" width="51" height="46" fill="#1d0d13"/></svg>
 <div class="t">Шатонеф-дю-Пап АОС<br>Кло де Л'Оратори де Пап</div>
 <div class="s">Chateaneuf-du-Pape AOC Clos de L'Oratoire des Papes</div>
 <div class="c2">Франция<br>Долина Роны<br>«Ожье»</div>
 <svg class="gl" width="14" height="34" viewBox="0 0 14 34"><path d="M1 1h12v10c0 6-3 9-5 9v11h4v2H2v-2h4V20c-2 0-5-3-5-9z" fill="#b8d67e"/></svg>
 <div class="c3">белое<br>сухое</div>
 <div class="c3b">Белый Гренаж, Клерет,<br>Русан, Бурбуленк</div>
 <div class="pc" style="top:140px">14 %</div><div class="pc" style="top:179px">0,75 л</div>
 <div class="ws">WS 90<br>WA 91<br>International Wine Cellar 90<br>Потенциал 30-40 лет</div>
 <div class="pr" style="width:128px"><span>2 500 р.</span></div>
 <div class="inf">i</div>
 <div class="ck on"><svg width="31" height="31" viewBox="0 0 31 31"><path d="M8 16l5 5 10-11" fill="none" stroke="#f7663b" stroke-width="3.5"/></svg></div>
</div>

<div class="card" style="top:4077px">
 <svg class="bt" width="51" height="209" viewBox="0 0 51 209"><path d="M18 0h16v55c0 6 17 14 17 36v110c0 5-4 8-10 8H10c-6 0-10-3-10-8V91c0-22 18-30 18-36z" fill="#1d0d13"/><path d="M18 0h16v50H18z" fill="#8b1c2b"/><rect x="0" y="92" width="51" height="63" fill="#ece9e5"/><rect x="0" y="148" width="22" height="7" fill="#d22"/><rect x="0" y="155" width="51" height="46" fill="#1d0d13"/></svg>
 <div class="t">Шатонеф-дю-Пап АОС<br>Кло де Л'Оратори де Пап</div>
 <div class="s">Chateaneuf-du-Pape AOC Clos de L'Oratoire des Papes</div>
 <div class="c2">Франция<br>Долина Роны<br>«Ожье»</div>
 <svg class="gl" width="14" height="34" viewBox="0 0 14 34"><path d="M1 1h12v10c0 6-3 9-5 9v11h4v2H2v-2h4V20c-2 0-5-3-5-9z" fill="#d8222a"/></svg>
 <div class="c3">красное<br>сухое</div>
 <div class="c3b">Белый Гренаж, Клерет,<br>Русан, Бурбуленк</div>
 <div class="pc" style="top:140px">14 %</div><div class="pc" style="top:179px">0,75 л</div>
 <div class="ws">WS 90<br>WA 91<br>International Wine Cellar 90<br>Потенциал 30-40 лет</div>
 <div class="pr" style="width:141px"><span>25 500 р.</span></div>
 <div class="ck"></div>
</div>

<div class="card" style="top:4322px">
 <svg class="bt" width="51" height="209" viewBox="0 0 51 209"><path d="M18 0h16v55c0 6 17 14 17 36v110c0 5-4 8-10 8H10c-6 0-10-3-10-8V91c0-22 18-30 18-36z" fill="#1d0d13"/><path d="M18 0h16v50H18z" fill="#8b1c2b"/><rect x="0" y="92" width="51" height="63" fill="#ece9e5"/><rect x="0" y="148" width="22" height="7" fill="#d22"/><rect x="0" y="155" width="51" height="46" fill="#1d0d13"/></svg>
 <div class="t">Шатонеф-дю-Пап АОС<br>Кло де Л'Оратори де Пап</div>
 <div class="s">Chateaneuf-du-Pape AOC Clos de L'Oratoire des Papes</div>
 <div class="c2">Франция<br>Долина Роны<br>«Ожье»</div>
 <svg class="gl" width="14" height="34" viewBox="0 0 14 34"><path d="M1 1h12v10c0 6-3 9-5 9v11h4v2H2v-2h4V20c-2 0-5-3-5-9z" fill="#d8222a"/></svg>
 <div class="c3">красное<br>сухое</div>
 <div class="c3b">Белый Гренаж, Клерет,<br>Русан, Бурбуленк</div>
 <div class="pc" style="top:140px">14 %</div><div class="pc" style="top:179px">0,75 л</div>
 <div class="ws">WS 90<br>WA 91<br>International Wine Cellar 90<br>Потенциал 30-40 лет</div>
 <div class="pr" style="width:141px"><span>25 500 р.</span></div>
 <div class="ck"></div>
</div>

<div class="blue" style="left:745px;top:4462px;font-size:17px">пределы экрана</div>

<div class="sb" style="top:3534px">
 <div class="hd"></div>
 <div class="a" style="left:0;top:30px;width:122px;text-align:center;color:#fff;font-size:22px;letter-spacing:1px">ВИНО</div>
 <div class="a" style="left:121px;top:22px;width:1px;height:50px;background:#eee"></div>
 <div class="a" style="left:124px;top:20px;width:122px;text-align:center;color:#fff;font-size:18px;line-height:22px;letter-spacing:.5px">КРЕПКИЙ<br>АЛКОГОЛЬ</div>
 <div class="h" style="top:101px">Страна</div>
 <div class="r on" style="top:131px"></div><div class="i" style="top:129px">Италия</div>
 <div class="r" style="top:150px"></div><div class="i" style="top:148px">Франция</div>
 <div class="r" style="top:169px"></div><div class="i" style="top:167px">Испания</div>
 <div class="r" style="top:188px"></div><div class="i" style="top:186px">Чили</div>
 <div class="m" style="top:207px">показать все</div>
 <div class="dl" style="top:237px"></div>
 <div class="h" style="top:249px">Регион</div>
 <div class="r on" style="top:278px"></div><div class="i" style="top:276px">Бордо</div>
 <div class="r" style="top:297px"></div><div class="i" style="top:295px">Долина Роны</div>
 <div class="r" style="top:316px"></div><div class="i" style="top:314px">Долина Луары</div>
 <div class="r" style="top:335px"></div><div class="i" style="top:333px">Шабли</div>
 <div class="m" style="top:355px">показать все</div>
 <div class="dl" style="top:384px"></div>
 <div class="h" style="top:396px">Категория</div>
 <svg class="a" style="left:80px;top:432px" width="20" height="32"><path d="M3 1h14v9c0 5-3 8-6 8v10h5v2H4v-2h5V18c-3 0-6-3-6-8z" fill="#b5d67c"/></svg>
 <svg class="a" style="left:156px;top:432px" width="20" height="32"><path d="M3 1h14v9c0 5-3 8-6 8v10h5v2H4v-2h5V18c-3 0-6-3-6-8z" fill="#da2128"/></svg>
 <div class="r on" style="left:83px;top:471px"></div><div class="r" style="left:159px;top:471px"></div>
 <div class="lb" style="left:50px;top:488px">белые</div><div class="lb" style="left:126px;top:488px">красные</div>
 <svg class="a" style="left:80px;top:521px" width="20" height="32"><path d="M3 1h14v9c0 5-3 8-6 8v10h5v2H4v-2h5V18c-3 0-6-3-6-8z" fill="#f7a3b8"/></svg>
 <svg class="a" style="left:156px;top:521px" width="20" height="32"><path d="M5 1h10v11c0 4-2 6-4 6v10h4v2H5v-2h4V18c-2 0-4-2-4-6z" fill="#f7c530"/><circle cx="9" cy="6" r="1.5" fill="#fff"/><circle cx="12" cy="11" r="1.5" fill="#fff"/></svg>
 <div class="r" style="left:83px;top:561px"></div><div class="r" style="left:159px;top:561px"></div>
 <div class="lb" style="left:50px;top:578px">розовые</div><div class="lb" style="left:126px;top:578px">игристые</div>
 <div class="m" style="top:602px">показать все</div>
 <div class="dl" style="top:630px"></div>
 <div class="h" style="top:642px">Производитель</div>
 <div class="r on" style="top:672px"></div><div class="i" style="top:670px">Люсьен Люртон</div>
 <div class="r" style="top:691px"></div><div class="i" style="top:689px">Ожье</div>
 <div class="r" style="top:710px"></div><div class="i" style="top:708px">Подджо Антико</div>
 <div class="r" style="top:729px"></div><div class="i" style="top:727px">Финка Вальпиедра</div>
 <div class="m" style="top:748px">показать все</div>
 <div class="dl" style="top:776px"></div>
 <div class="h" style="top:789px">Цена</div>
 <div class="r on" style="top:819px"></div><div class="i" style="top:817px">0 - 550</div>
 <div class="r" style="top:838px"></div><div class="i" style="top:836px">551 - 1000</div>
 <div class="m" style="top:858px">показать все</div>
 <div class="b">ПОЛНЫЙ КАТАЛОГ</div>
</div>

<div class="blue" style="left:1352px;top:4530px;font-size:17px;line-height:21.5px">при прокрутке страницы<br>каталог опускается.<br>Т.е. он все время должен висеть<br>с правой стороны экрана<br>(только на главной)</div>

</body></html>
